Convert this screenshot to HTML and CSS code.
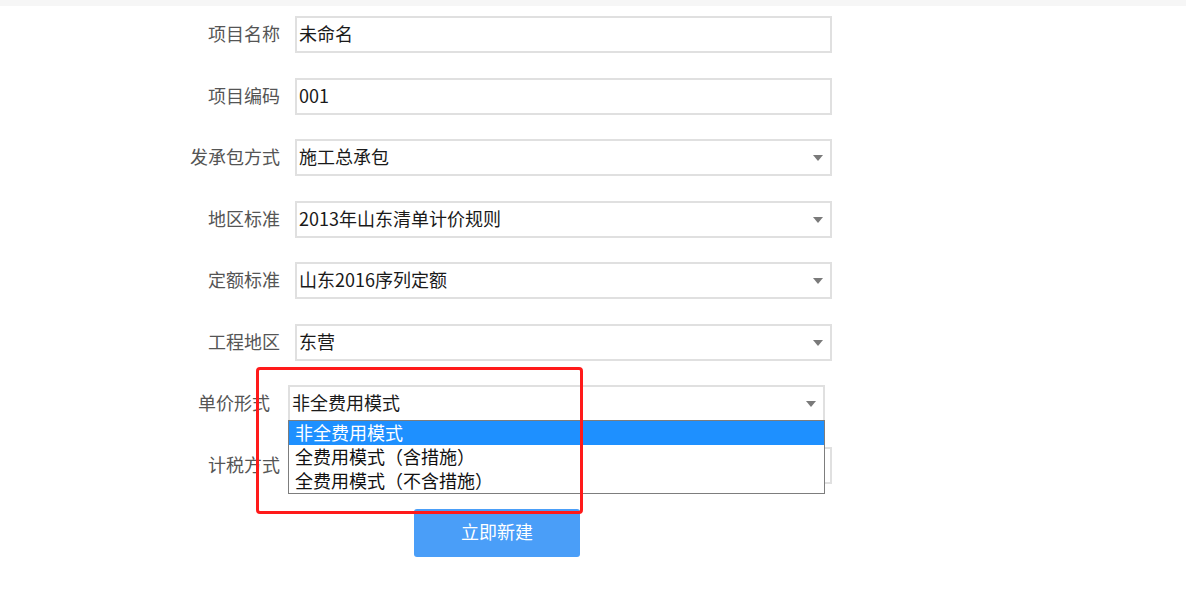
FILE: index.html
```html
<!DOCTYPE html>
<html lang="zh-CN">
<head>
<meta charset="utf-8">
<title>新建项目</title>
<link rel="stylesheet" href="styles.css">
</head>
<body>
<div class="topbar"></div>
<div class="form">
  <div class="row">
    <label class="label">项目名称</label>
    <div class="field">未命名</div>
  </div>
  <div class="row">
    <label class="label">项目编码</label>
    <div class="field">001</div>
  </div>
  <div class="row">
    <label class="label">发承包方式</label>
    <div class="field select">施工总承包<span class="arrow"></span></div>
  </div>
  <div class="row">
    <label class="label">地区标准</label>
    <div class="field select">2013年山东清单计价规则<span class="arrow"></span></div>
  </div>
  <div class="row">
    <label class="label">定额标准</label>
    <div class="field select">山东2016序列定额<span class="arrow"></span></div>
  </div>
  <div class="row">
    <label class="label">工程地区</label>
    <div class="field select">东营<span class="arrow"></span></div>
  </div>
  <div class="row row-shift">
    <label class="label">单价形式</label>
    <div class="field select open">非全费用模式<span class="arrow"></span>
      <ul class="options">
        <li class="option active">非全费用模式</li>
        <li class="option">全费用模式（含措施）</li>
        <li class="option">全费用模式（不含措施）</li>
      </ul>
    </div>
  </div>
  <div class="row">
    <label class="label">计税方式</label>
    <div class="field select"><span class="arrow"></span></div>
  </div>
  <div class="actions">
    <button class="btn">立即新建</button>
  </div>
  <div class="highlight-box"></div>
</div>
</body>
</html>
```

FILE: styles.css
```css
* { box-sizing: border-box; }
html, body {
  margin: 0;
  padding: 0;
  background: #ffffff;
  font-family: "Noto Sans CJK SC", "Microsoft YaHei", sans-serif;
}
.topbar {
  height: 6px;
  background: #f6f6f6;
}
.form {
  position: relative;
  padding: 10px 0 0 180px;
  display: flex;
  flex-direction: column;
  gap: 24.5px;
}
.row {
  display: flex;
  align-items: center;
  height: 37px;
}
.label {
  flex: none;
  width: 100px;
  text-align: right;
  font-size: 18px;
  line-height: 33px;
  padding-bottom: 2px;
  color: #555555;
  margin-right: 15px;
  white-space: nowrap;
}
.field {
  flex: none;
  position: relative;
  width: 537px;
  height: 37px;
  border: 2px solid #e0e0e0;
  padding: 0 2px;
  font-size: 18px;
  line-height: 31px;
  color: #1a1a1a;
  white-space: nowrap;
}
.arrow {
  position: absolute;
  right: 7px;
  top: 14px;
  width: 0;
  height: 0;
  border-left: 5px solid transparent;
  border-right: 5px solid transparent;
  border-top: 6px solid #7a7a7a;
}
.row-shift {
  margin-left: -7px;
}
.row-shift .label {
  width: 97px;
  margin-right: 18px;
}
.options {
  position: absolute;
  z-index: 5;
  left: -2px;
  top: 33px;
  width: 537px;
  margin: 0;
  padding: 0;
  list-style: none;
  background: #ffffff;
  border: 1px solid #7d7d7d;
}
.option {
  height: 24px;
  line-height: 22px;
  padding-left: 6px;
  font-size: 18px;
  color: #111111;
}
.option.active {
  background: #1e90ff;
  color: #ffffff;
}
.actions {
  margin-top: 1px;
  padding-left: 234px;
}
.btn {
  width: 166px;
  height: 48px;
  border: none;
  border-radius: 3px;
  background: #4a9ef8;
  color: #ffffff;
  font-family: inherit;
  font-size: 18px;
  line-height: 44px;
  padding: 0 0 4px;
}
.highlight-box {
  position: absolute;
  z-index: 10;
  left: 256px;
  top: 361px;
  width: 327px;
  height: 147px;
  border: 3px solid #ff1a1a;
  border-radius: 4px;
  pointer-events: none;
}
```
